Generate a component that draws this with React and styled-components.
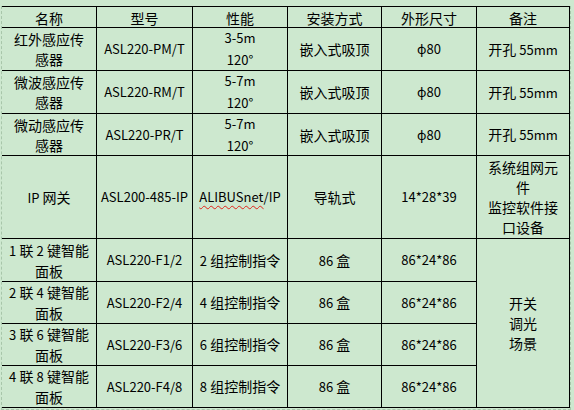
import React from "react";
import styled, { createGlobalStyle } from "styled-components";

const GlobalStyle = createGlobalStyle`
  body {
    margin: 0;
    background: #cde8cf;
    font-family: "Noto Sans CJK SC", "Noto Sans", sans-serif;
    color: #000;
  }
`;

const Page = styled.div`
  padding-top: 6px;
  width: 574px;
  height: 410px;
  box-sizing: border-box;
`;

const Frame = styled.div`
  width: 570px;
  margin-left: 1px;
  box-sizing: border-box;
  border-left: 1px dashed #a8c6aa;
  border-right: 1px dashed #a8c6aa;
  padding-bottom: 1px;
  border-bottom: 1px dashed #a8c6aa;
`;

const Table = styled.div`
  display: grid;
  grid-template-columns: 95px 96px 95px 94px 95px 93px;
  grid-template-rows: 21px 43px 43px 42px 83px 43px 42px 42px 42px;
  border-top: 1px solid #000;
`;

const Box = styled.div`
  box-sizing: border-box;
  border-right: 1px solid #000;
  border-bottom: 1px solid #000;
  grid-row: ${({ $span }) => ($span ? `span ${$span}` : "auto")};
  display: flex;
  align-items: center;
  justify-content: center;
  text-align: center;
  padding: ${({ $head }) => ($head ? "1px 4px 0" : "0 4px")};
  font-size: ${({ $latin }) => ($latin ? "13px" : "14px")};
  line-height: ${({ $head, $loose }) =>
    $head ? "18px" : $loose ? "22px" : "20px"};
  white-space: nowrap;
  overflow: hidden;
`;

const Text = styled.span`
  display: block;
`;

const Misspelt = styled.span`
  text-decoration: underline wavy #e2231a;
  text-decoration-thickness: 1px;
  text-underline-offset: 3px;
`;

const Num = styled.span`
  font-size: 13px;
`;

const Cell = ({ children, ...rest }) => (
  <Box {...rest}>
    <Text>{children}</Text>
  </Box>
);

const headers = ["名称", "型号", "性能", "安装方式", "外形尺寸", "备注"];

const sensors = [
  ["红外感应传", "ASL220-PM/T", "3-5m"],
  ["微波感应传", "ASL220-RM/T", "5-7m"],
  ["微动感应传", "ASL220-PR/T", "5-7m"],
];

const panels = [
  ["1", "2", "ASL220-F1/2"],
  ["2", "4", "ASL220-F2/4"],
  ["3", "6", "ASL220-F3/6"],
  ["4", "8", "ASL220-F4/8"],
];

const App = () => {
  return (
    <Page>
      <GlobalStyle />
      <Frame>
        <Table>
          {headers.map((h) => (
            <Cell key={h} $head>
              {h}
            </Cell>
          ))}

          {sensors.map(([name, model, range]) => (
            <React.Fragment key={model}>
              <Cell>
                {name}
                <br />
                感器
              </Cell>
              <Cell $latin>{model}</Cell>
              <Cell $latin $loose>
                {range}
                <br />
                120°
              </Cell>
              <Cell>嵌入式吸顶</Cell>
              <Cell $latin>ϕ80</Cell>
              <Cell>
                开孔 <Num>55mm</Num>
              </Cell>
            </React.Fragment>
          ))}

          <Cell>
            <Num>IP</Num> 网关
          </Cell>
          <Cell $latin>ASL200-485-IP</Cell>
          <Cell $latin>
            <Misspelt>ALIBUSnet</Misspelt>/IP
          </Cell>
          <Cell>导轨式</Cell>
          <Cell $latin>14*28*39</Cell>
          <Cell>
            系统组网元
            <br />
            件
            <br />
            监控软件接
            <br />
            口设备
          </Cell>

          {panels.map(([n, k, model], i) => (
            <React.Fragment key={model}>
              <Cell>
                <Num>{n}</Num> 联 <Num>{k}</Num> 键智能
                <br />
                面板
              </Cell>
              <Cell $latin>{model}</Cell>
              <Cell>
                <Num>{k}</Num> 组控制指令
              </Cell>
              <Cell>
                <Num>86</Num> 盒
              </Cell>
              <Cell $latin>86*24*86</Cell>
              {i === 0 && (
                <Cell $span={4}>
                  开关
                  <br />
                  调光
                  <br />
                  场景
                </Cell>
              )}
            </React.Fragment>
          ))}
        </Table>
      </Frame>
    </Page>
  );
};

export default App;
